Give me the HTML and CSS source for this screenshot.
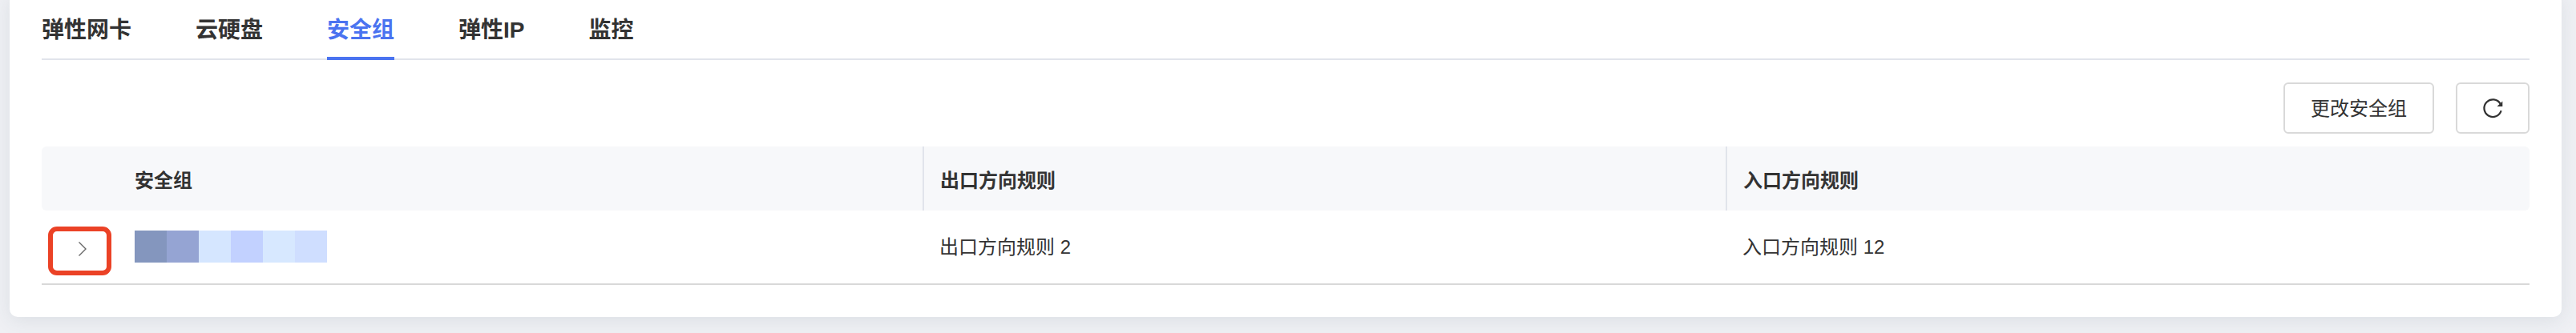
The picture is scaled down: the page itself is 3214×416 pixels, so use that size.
FILE: index.html
```html
<!DOCTYPE html>
<html lang="zh-CN">
<head>
  <meta charset="UTF-8">
  <meta name="viewport" content="width=device-width, initial-scale=1.0">
  <title>安全组</title>
  <link rel="stylesheet" href="styles.css">
</head>
<body>
  <main class="card">
    <nav class="tabs">
      <a class="tab">弹性网卡</a>
      <a class="tab">云硬盘</a>
      <a class="tab active">安全组</a>
      <a class="tab">弹性IP</a>
      <a class="tab">监控</a>
    </nav>

    <div class="toolbar">
      <button class="btn">更改安全组</button>
      <button class="btn btn-icon" aria-label="刷新">
        <svg width="28" height="28" viewBox="0 0 28 28">
          <path d="M24.6 17.2A10.8 10.8 0 1 1 23.6 8.8" fill="none" stroke="#333" stroke-width="2.3"/>
          <path d="M26.3 5.6V12h-6.8z" fill="#333"/>
        </svg>
      </button>
    </div>

    <div class="table">
      <div class="row head">
        <div class="cell expand"></div>
        <div class="cell name">安全组</div>
        <div class="cell out">出口方向规则</div>
        <div class="cell in">入口方向规则</div>
      </div>
      <div class="row data">
        <div class="cell expand">
          <span class="mark">
            <svg width="12" height="20" viewBox="0 0 12 20">
              <path d="M1.5 1.5L10 10l-8.5 8.5" fill="none" stroke="#666" stroke-width="1.4"/>
            </svg>
          </span>
        </div>
        <div class="cell name">
          <div class="mosaic">
            <i class="c1"></i><i class="c2"></i><i class="c3"></i><i class="c4"></i><i class="c5"></i><i class="c6"></i>
          </div>
        </div>
        <div class="cell out">出口方向规则 2</div>
        <div class="cell in">入口方向规则 12</div>
      </div>
    </div>
  </main>
</body>
</html>
```
FILE: styles.css
```css
* {
  box-sizing: border-box;
}
html {
  background: #eff0f4;
}
body {
  display: flow-root;
  margin: 0;
  height: 416px;
  overflow: hidden;
  color: #333;
  font-family: "Liberation Sans", "Noto Sans CJK SC", sans-serif;
  font-size: 24px;
}
.card {
  width: 3184px;
  height: 404px;
  margin: -8px 0 0 12px;
  padding: 8px 40px 0;
  background: #fff;
  border-radius: 10px;
  box-shadow: 0 4px 24px rgba(50, 80, 90, 0.1);
}
.tabs {
  display: flex;
  gap: 80px;
  height: 75px;
  border-bottom: 2px solid #e1e4eb;
}
.tab {
  height: 75px;
  line-height: 75px;
  font-size: 28px;
  font-weight: 600;
}
.tab.active {
  color: #4a73f0;
  border-bottom: 4px solid #4a73f0;
}
.toolbar {
  display: flex;
  justify-content: flex-end;
  gap: 27px;
  padding: 28px 0 16px;
}
.btn {
  display: flex;
  align-items: center;
  justify-content: center;
  width: 188px;
  height: 64px;
  padding: 0 0 4px;
  background: #fff;
  border: 2px solid #d9d9d9;
  border-radius: 6px;
  color: #333;
  font: inherit;
}
.btn-icon {
  width: 92px;
  padding: 0;
}
.row {
  display: flex;
}
.cell {
  display: flex;
  align-items: center;
}
.expand {
  width: 116px;
  padding-left: 8px;
}
.name {
  width: 983px;
}
.out {
  width: 1002px;
  padding-left: 20px;
}
.in {
  flex: 1;
  padding-left: 20px;
}
.head {
  height: 80px;
  background: #f7f8fa;
  border-radius: 6px;
  font-weight: 600;
}
.head .out,
.head .in {
  border-left: 2px solid #e1e4eb;
}
.data {
  height: 93px;
  border-bottom: 2px solid #d9d9d9;
}
.data .name {
  align-items: flex-start;
  padding-top: 25px;
}
.data .out,
.data .in {
  padding-left: 21px;
  padding-bottom: 5px;
}
.mark {
  display: flex;
  align-items: center;
  justify-content: center;
  width: 79px;
  height: 61px;
  margin-top: 10px;
  padding: 0 0 5px 7px;
  border: 6px solid #eb4226;
  border-radius: 11px;
}
.mosaic {
  display: flex;
}
.mosaic i {
  width: 40px;
  height: 40px;
}
.c1 { background: #8496be; }
.c2 { background: #95a4d3; }
.c3 { background: #d5e6ff; }
.c4 { background: #c2d1ff; }
.c5 { background: #d7e8ff; }
.c6 { background: #cfdeff; }
```
